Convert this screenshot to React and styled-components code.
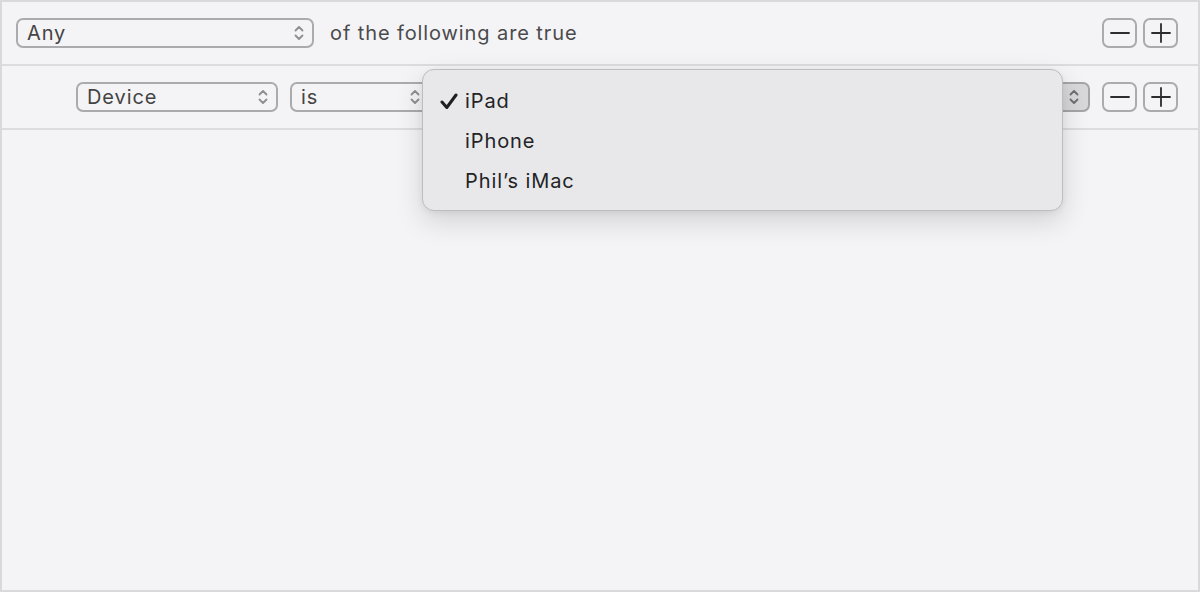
import React from "react";
import styled, { createGlobalStyle } from "styled-components";

const GlobalStyle = createGlobalStyle`
  html, body {
    margin: 0;
    padding: 0;
    background: #f4f4f6;
  }
  * {
    box-sizing: border-box;
  }
`;

const Frame = styled.div`
  position: relative;
  width: 1200px;
  height: 592px;
  background: #f4f4f6;
  border: 2px solid #d9d9dc;
  font-family: Inter, "Noto Sans", sans-serif;
  letter-spacing: 0.9px;
  color: #444;
  overflow: hidden;
`;

const Row = styled.div`
  display: flex;
  align-items: center;
  height: 64px;
  padding: 0 20px 0 ${(p) => p.indent}px;
  border-bottom: 2px solid #dcdcdf;
`;

const Select = styled.div`
  display: flex;
  align-items: center;
  justify-content: space-between;
  width: ${(p) => p.width}px;
  height: 30px;
  margin-right: ${(p) => p.gap || 0}px;
  padding: 0 8px 0 9px;
  border: 2px solid #ababad;
  border-radius: 7px;
  font-size: 20px;
  color: #444;
  background: transparent;
`;

const ArrowBox = styled.div`
  display: flex;
  align-items: center;
  justify-content: center;
  width: 30px;
  height: 30px;
  margin-left: auto;
  margin-right: 12px;
  border: 2px solid #a5a5a8;
  border-left: none;
  border-radius: 0 7px 7px 0;
  background: #d8d8db;
`;

const Label = styled.span`
  font-size: 20px;
  color: #4a4a4c;
`;

const Spacer = styled.div`
  flex: 1;
`;

const IconButton = styled.div`
  display: flex;
  align-items: center;
  justify-content: center;
  width: 35px;
  height: 30px;
  margin-left: ${(p) => p.gap || 0}px;
  border: 2px solid #ababad;
  border-radius: 7px;
`;

const Menu = styled.div`
  position: absolute;
  left: 420px;
  top: 67px;
  width: 641px;
  height: 142px;
  padding: 11px 0;
  background: #e8e8ea;
  border: 1px solid #bdbdc0;
  border-radius: 12px;
  box-shadow: 0 10px 28px rgba(0, 0, 0, 0.14), 0 2px 6px rgba(0, 0, 0, 0.06);
`;

const MenuItem = styled.div`
  display: flex;
  align-items: center;
  height: 40px;
  padding-left: 17px;
  font-size: 20px;
  color: #232325;
`;

const CheckSlot = styled.span`
  display: inline-flex;
  width: 25px;
  align-items: center;
`;

const Chevrons = ({ color = "#8e8e91" }) => (
  <svg width="10" height="16" viewBox="0 0 10 16">
    <path
      d="M1.5 5.5 L5 2 L8.5 5.5 M1.5 10.5 L5 14 L8.5 10.5"
      fill="none"
      stroke={color}
      strokeWidth="1.8"
      strokeLinecap="round"
      strokeLinejoin="round"
    />
  </svg>
);

const Minus = () => (
  <svg width="20" height="20" viewBox="0 0 20 20">
    <path d="M1 10 H19" stroke="#2c2c2e" strokeWidth="1.8" strokeLinecap="round" />
  </svg>
);

const Plus = () => (
  <svg width="20" height="20" viewBox="0 0 20 20">
    <path d="M1 10 H19 M10 1 V19" stroke="#2c2c2e" strokeWidth="1.8" strokeLinecap="round" />
  </svg>
);

const Check = () => (
  <svg width="18" height="17" viewBox="0 0 18 17">
    <path
      d="M2 9 L6.8 14.5 L16 2"
      fill="none"
      stroke="#1f1f21"
      strokeWidth="3"
      strokeLinecap="round"
      strokeLinejoin="round"
    />
  </svg>
);

const devices = ["iPad", "iPhone", "Phil’s iMac"];

export default function App() {
  return (
    <>
      <GlobalStyle />
      <Frame>
        <Row indent={14}>
          <Select width={298} gap={16}>
            <span>Any</span>
            <Chevrons />
          </Select>
          <Label>of the following are true</Label>
          <Spacer />
          <IconButton>
            <Minus />
          </IconButton>
          <IconButton gap={6}>
            <Plus />
          </IconButton>
        </Row>
        <Row indent={74}>
          <Select width={202} gap={12}>
            <span>Device</span>
            <Chevrons />
          </Select>
          <Select width={140}>
            <span>is</span>
            <Chevrons />
          </Select>
          <ArrowBox>
            <Chevrons color="#6e6e72" />
          </ArrowBox>
          <IconButton>
            <Minus />
          </IconButton>
          <IconButton gap={6}>
            <Plus />
          </IconButton>
        </Row>
        <Menu>
          {devices.map((name, i) => (
            <MenuItem key={name}>
              <CheckSlot>{i === 0 && <Check />}</CheckSlot>
              {name}
            </MenuItem>
          ))}
        </Menu>
      </Frame>
    </>
  );
}
